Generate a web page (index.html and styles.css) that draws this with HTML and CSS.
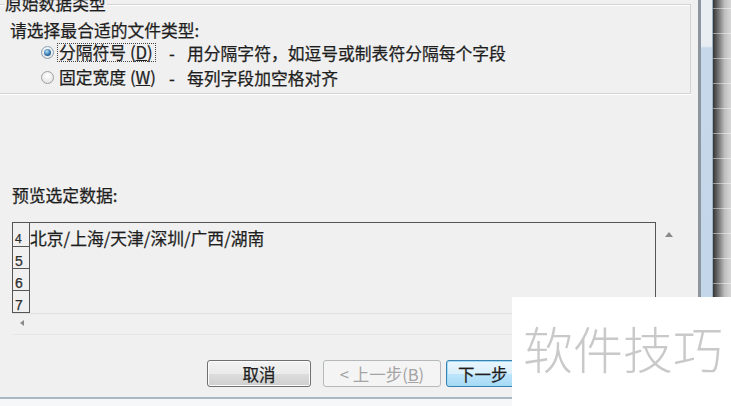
FILE: index.html
```html
<!DOCTYPE html>
<html lang="zh-CN">
<head>
    <meta charset="UTF-8">
    <meta name="viewport" content="width=device-width, initial-scale=1.0">
    <title>文本导入向导</title>
    <link rel="stylesheet" href="styles.css">
</head>
<body>

<div class="dialog">
    <div class="group">
        <span class="legend">原始数据类型</span>
        <div class="prompt">请选择最合适的文件类型:</div>
        <div class="option">
            <span class="radio checked"></span>
            <span class="opt-name focus">分隔符号 (<u>D</u>)</span>
            <span class="dash">-</span>
            <span class="opt-desc">用分隔字符，如逗号或制表符分隔每个字段</span>
        </div>
        <div class="option">
            <span class="radio"></span>
            <span class="opt-name">固定宽度 (<u>W</u>)</span>
            <span class="dash">-</span>
            <span class="opt-desc">每列字段加空格对齐</span>
        </div>
    </div>

    <div class="preview-label">预览选定数据:</div>
    <div class="preview">
        <div class="preview-main">
            <div class="grid">
                <div class="row first"><span class="num">4</span><span class="cell">北京/上海/天津/深圳/广西/湖南</span></div>
                <div class="row"><span class="num">5</span><span class="cell"></span></div>
                <div class="row"><span class="num">6</span><span class="cell"></span></div>
                <div class="row"><span class="num">7</span><span class="cell"></span></div>
            </div>
            <div class="vscroll"><span class="arrow-up"></span></div>
        </div>
        <div class="hscroll"><span class="arrow-left"></span></div>
    </div>

    <div class="buttons">
        <button class="btn btn-cancel">取消</button>
        <button class="btn btn-prev" disabled>&lt; 上一步(<u>B</u>)</button>
        <button class="btn btn-next">下一步</button>
    </div>
    <div class="statusbar"></div>
</div>
<div class="frame"></div>
<div class="sheet"></div>

<div class="watermark">软件技巧</div>

</body>
</html>
```

FILE: styles.css
```css
* {
    box-sizing: border-box;
}
body {
    margin: 0;
    width: 731px;
    height: 406px;
    overflow: hidden;
    display: flex;
    position: relative;
    font-family: "Noto Sans CJK SC", sans-serif;
    font-size: 16.8px;
    color: #1e1e1e;
    background: #f0f0f0;
}
u {
    text-decoration-thickness: 1px;
}

/* dialog body */
.dialog {
    width: 698px;
    display: flex;
    flex-direction: column;
    background: #f0f0f0;
    -webkit-text-stroke: 0.25px #1e1e1e;
}
.group {
    position: relative;
    height: 90px;
    margin: 4px 7px 0 -4px;
    padding-left: 13px;
    border: 1px solid #d3d3d3;
    box-shadow: inset 1px 1px 0 #fff, 0 1px 0 #fff;
}
.legend {
    position: absolute;
    top: -12px;
    left: 7px;
    padding: 0 1px;
    line-height: 20px;
    background: #f0f0f0;
}
.prompt {
    margin-top: 15px;
    line-height: 20px;
}
.option {
    display: flex;
    align-items: center;
    height: 25px;
    padding-left: 31px;
    white-space: nowrap;
}
.radio {
    width: 13px;
    height: 13px;
    border-radius: 50%;
    border: 1px solid #a0a0a0;
    background: radial-gradient(circle at 50% 35%, #fff, #dcdcdc);
    display: flex;
    align-items: center;
    justify-content: center;
}
.radio.checked {
    border-color: #8aa0b4;
}
.radio.checked::after {
    content: "";
    width: 7px;
    height: 7px;
    border-radius: 50%;
    background: radial-gradient(circle at 40% 35%, #b4e2fa, #2b6ba4 60%, #174a78);
}
.opt-name {
    width: 99px;
    margin-left: 3px;
    padding: 0 1px;
    line-height: 17px;
    border: 1px dotted transparent;
}
.opt-name.focus {
    border-color: #444;
}
.dash {
    width: 18px;
    margin-left: 13px;
}

/* preview */
.preview-label {
    margin: 91px 0 0 12px;
    line-height: 20px;
}
.preview {
    margin: 17px 8px 0 12px;
}
.preview-main {
    display: flex;
    height: 91px;
}
.grid {
    width: 644px;
    border: 1px solid #555;
    border-bottom: none;
    overflow: hidden;
}
.row {
    display: flex;
    height: 22px;
}
.row.first {
    height: 24px;
}
.num {
    width: 17px;
    padding-left: 2px;
    display: flex;
    align-items: flex-end;
    border-right: 1px solid #555;
    border-bottom: 1px solid #555;
    font-family: "Liberation Sans", sans-serif;
    font-size: 14px;
    line-height: 14px;
    color: #333;
}
.row.first .num {
    font-size: 12px;
    line-height: 12px;
    padding-bottom: 1px;
}
.cell {
    padding-top: 5px;
    line-height: 20px;
    white-space: nowrap;
}
.vscroll {
    flex: 1;
    padding: 10px 0 0 9px;
}
.arrow-up {
    display: block;
    width: 0;
    height: 0;
    border-left: 4px solid transparent;
    border-right: 4px solid transparent;
    border-bottom: 5px solid #8a8a8a;
}
.hscroll {
    height: 22px;
    padding: 6px 0 0 8px;
    border-top: 1px solid #e0e0e0;
    border-bottom: 1px solid #e6e6e6;
}
.arrow-left {
    display: block;
    width: 0;
    height: 0;
    border-top: 3px solid transparent;
    border-bottom: 3px solid transparent;
    border-right: 4px solid #8a8a8a;
}

/* buttons */
.buttons {
    display: flex;
    margin-top: 25px;
    padding-left: 207px;
}
.btn {
    height: 27px;
    padding: 0;
    font-family: inherit;
    font-size: 16.5px;
    color: #1e1e1e;
    border: 1px solid #707070;
    border-radius: 3px;
    background: linear-gradient(#f2f2f2, #ebebeb 50%, #dddddd 51%, #cfcfcf);
    box-shadow: inset 0 0 0 1px #fcfcfc;
    white-space: nowrap;
}
.btn-cancel {
    width: 104px;
    margin-right: 12px;
}
.btn-prev {
    width: 118px;
    margin-right: 5px;
    color: #a3a3a3;
    -webkit-text-stroke: 0;
    border-color: #b5b9bc;
    background: #f4f4f4;
    box-shadow: none;
}
.btn-next {
    width: 118px;
    padding-left: 11px;
    text-align: left;
    border-color: #3c7fb1;
    background: linear-gradient(#eaf6fd, #d9f0fc 50%, #bee6fd 51%, #a7d9f5);
    box-shadow: inset 0 0 0 1px #9fdcf6;
}
.statusbar {
    flex: 1;
    margin-top: 10px;
    border-top: 2px solid #a9b6c3;
    background: #f6f7f9;
}

/* window frame and sheet behind */
.frame {
    width: 15px;
    border-left: 3px solid #8d959e;
    border-right: 1px solid #9eb2c6;
    background: linear-gradient(#e9eef3, #e9eef3 46px, #c6d8ea 48px, #c3d6e9);
}
.sheet {
    flex: 1;
    background:
        repeating-linear-gradient(to bottom, transparent 0 24px, rgba(255, 255, 255, 0.45) 24px 25px),
        linear-gradient(to right, #333, #737373 30%, #c0c0c0 65%, #d8d8d8);
    background-position: 0 -16px, 0 0;
}

.watermark {
    position: absolute;
    right: 0;
    bottom: 0;
    width: 219px;
    height: 109px;
    padding: 0 0 9px 11px;
    display: flex;
    align-items: center;
    background: #fff;
    color: #c9c9c9;
    font-size: 50px;
    font-weight: 300;
    line-height: 1;
    white-space: nowrap;
}
```
